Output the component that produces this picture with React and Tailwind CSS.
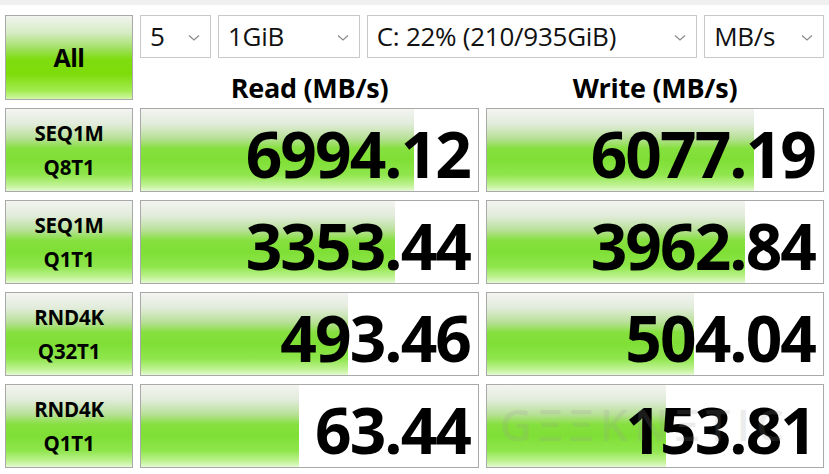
import React from 'react'

const bar =
  'bg-[linear-gradient(to_bottom,#f3f4f1_0%,#e2ecdb_18%,#b7e096_36%,#86e03f_48%,#7fdf35_62%,#8fe64c_80%,#c4f39a_94%,#e6fad4_100%)]'

const rows = [
  { l1: 'SEQ1M', l2: 'Q8T1', read: '6994.12', readPct: 81, write: '6077.19', writePct: 79.5 },
  { l1: 'SEQ1M', l2: 'Q1T1', read: '3353.44', readPct: 75.5, write: '3962.84', writePct: 76.8 },
  { l1: 'RND4K', l2: 'Q32T1', read: '493.46', readPct: 61.5, write: '504.04', writePct: 61.6 },
  { l1: 'RND4K', l2: 'Q1T1', read: '63.44', readPct: 46.8, write: '153.81', writePct: 53.4 },
]

const Select = ({ value, className }) => (
  <div className={`flex items-center justify-between border border-[#c9c9c9] bg-white pl-[9px] pr-[10px] h-[43px] ${className}`}>
    <span className="text-[26px] leading-[1.2] text-[#111] tracking-[-0.01em]">{value}</span>
    <svg width="12" height="8" viewBox="0 0 12 8" className="mt-[2px]">
      <path d="M1 1.5 L6 6 L11 1.5" fill="none" stroke="#8a8a8a" strokeWidth="1.2" />
    </svg>
  </div>
)

const Result = ({ value, pct }) => (
  <div className="relative h-[84px] border border-[#a9a9a9] bg-white overflow-hidden">
    <div className={`absolute left-0 top-0 bottom-0 ${bar}`} style={{ width: pct + '%' }} />
    <div className="relative flex h-full items-center justify-end pr-[8px] pt-[8px]">
      <span className="text-[64px] font-bold leading-[1.1] tracking-[-0.03em] text-black">{value}</span>
    </div>
  </div>
)

export default function App() {
  return (
    <div className="relative w-[829px] h-[474px] bg-white overflow-hidden" style={{ fontFamily: '"Open Sans", "Noto Sans", sans-serif' }}>
      <div className="h-[5px] bg-[#f0f0f0]" />
      <div className="grid grid-cols-[128px_339px_338px] gap-x-[7px] px-[5px] pt-[10px]">
        {/* All button + selects */}
        <div className="row-span-2 flex h-[85px] items-center justify-center border border-[#a9a9a9] bg-[linear-gradient(to_bottom,#f2f4ef_0%,#d6ecc4_20%,#a4e168_38%,#7fdc10_52%,#7edc0a_70%,#a2ec50_90%,#d2f7a8_100%)]">
          <span className="text-[25px] font-bold text-black tracking-[-0.02em]">All</span>
        </div>
        <div className="col-span-2 flex gap-[7px]">
          <Select value="5" className="w-[71px]" />
          <Select value="1GiB" className="w-[142px]" />
          <Select value="C: 22% (210/935GiB)" className="w-[331px]" />
          <Select value="MB/s" className="w-[120px]" />
        </div>
        <div className="flex h-[50px] items-center justify-center pt-[10px]">
          <span className="text-[27px] font-bold leading-[1.2] text-black tracking-[-0.01em]">Read (MB/s)</span>
        </div>
        <div className="flex h-[50px] items-center justify-center pt-[10px]">
          <span className="text-[27px] font-bold leading-[1.2] text-black tracking-[-0.01em]">Write (MB/s)</span>
        </div>
      </div>

      <div className="grid grid-cols-[128px_339px_338px] gap-x-[7px] gap-y-[8px] px-[5px]">
        {rows.map((r, i) => (
          <React.Fragment key={i}>
            <div className={`flex h-[84px] flex-col items-center justify-center border border-[#a9a9a9] ${bar}`}>
              <span className="text-[20.5px] font-bold leading-[34px] text-black tracking-[-0.01em]">{r.l1}</span>
              <span className="text-[20.5px] font-bold leading-[34px] text-black tracking-[-0.01em]">{r.l2}</span>
            </div>
            <Result value={r.read} pct={r.readPct} />
            <Result value={r.write} pct={r.writePct} />
          </React.Fragment>
        ))}
      </div>

      {/* watermark */}
      <div className="pointer-events-none absolute left-[500px] top-[398px] text-[44px] font-semibold leading-[1.2] tracking-[0.14em] text-[#9a9a9a] opacity-[0.18]">
        GΞΞKNΞTIC
      </div>
    </div>
  )
}
